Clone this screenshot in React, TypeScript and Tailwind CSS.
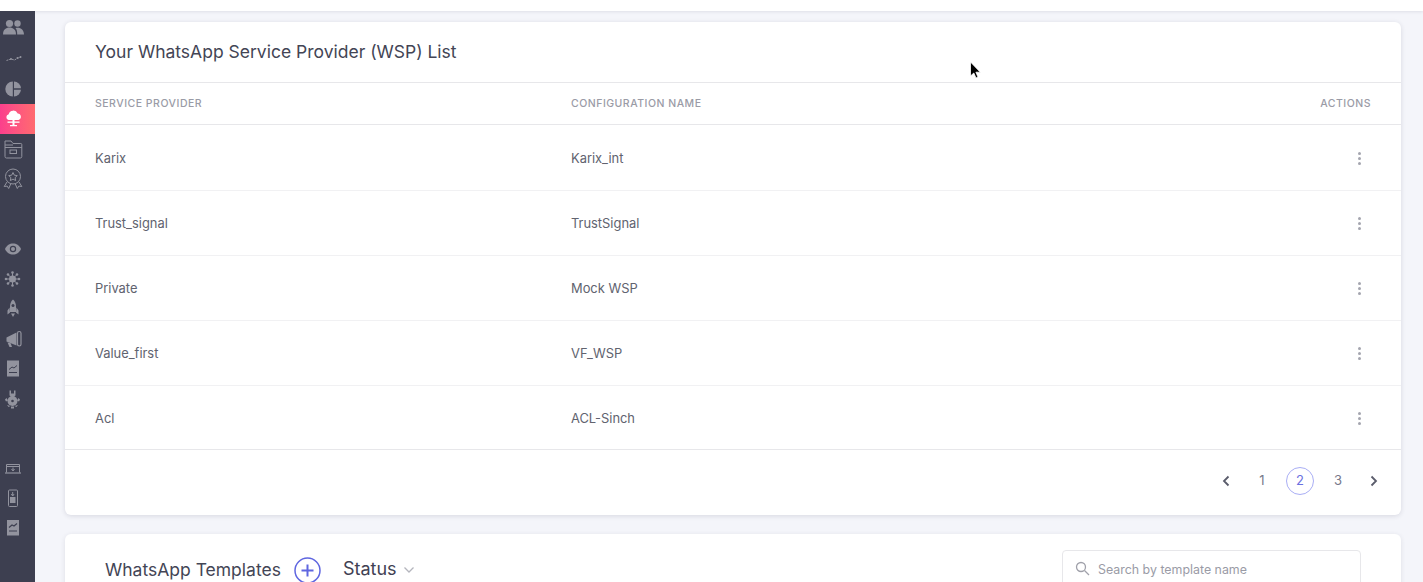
import React from "react";

const c = "#92939e";

function Side({ children, active }: { children: React.ReactNode; active?: boolean }) {
  return (
    <div className={"flex h-[30px] w-[35px] items-center justify-start " + (active ? "bg-gradient-to-r from-[#fb3f8c] to-[#ff6a6f]" : "")}>
      {children}
    </div>
  );
}

const I = ({ children }: { children: React.ReactNode }) => (
  <svg width="26" height="24" viewBox="0 0 26 24">{children}</svg>
);

const rows = [
  ["Karix", "Karix_int", "h-[66px] pt-[2px]"],
  ["Trust_signal", "TrustSignal", "h-[65px] pt-[1px]"],
  ["Private", "Mock WSP", "h-[65px] pt-[1px]"],
  ["Value_first", "VF_WSP", "h-[65px] pt-[1px]"],
  ["Acl", "ACL-Sinch", "h-[64px] pt-[2px]"],
];

export default function App() {
  return (
    <div className="relative flex h-[582px] w-[1423px] flex-col overflow-hidden bg-[#f4f5fa] text-[#4a4c5c] [font-family:Inter,'Liberation_Sans',sans-serif]">
      <div className="h-[11px] shrink-0 bg-white shadow-[0_1px_3px_rgba(40,40,70,0.1)]" />
      <div className="flex min-h-0 flex-1">
        <aside className="flex w-[35px] shrink-0 flex-col bg-[#3d3f50] pt-[3px]">
          <Side>
            <I>
              <circle cx="9.500" cy="6.500" r="3.600" fill={c} />
              <circle cx="17.500" cy="6.500" r="3.200" fill={c} />
              <path d="M3 17.500c0-5 3-7 6.500-7s6.500 2 6.500 7z" fill={c} />
              <path d="M16.500 10.800c4-.6 7.500 2 7.500 6.700h-6.800c0-3-.3-5-1.700-6.200z" fill={c} />
            </I>
          </Side>
          <Side>
            <I>
              <path d="M6.500 13.500l4.500-1.500 3.500 1 3.500-2 3-1" fill="none" stroke={c} strokeWidth="1" strokeDasharray="2 .8" />
              <circle cx="11" cy="12" r="1" fill={c} />
              <circle cx="17.500" cy="11" r="1" fill={c} />
              <circle cx="20.500" cy="10" r="1" fill={c} />
            </I>
          </Side>
          <Side>
            <I>
              <path d="M12.800 4.500a7.500 7.500 0 1 0 0 15z" fill={c} />
              <path d="M14 4.500a7.500 7.500 0 0 1 7 6.800h-7z" fill={c} />
              <path d="M14 12.800h7a7.500 7.500 0 0 1-7 6.700z" fill={c} />
            </I>
          </Side>
          <Side active>
            <I>
              <path d="M8.500 13a3 3 0 0 1 .2-5.800 4.800 4.800 0 0 1 9-.8 3.400 3.400 0 0 1 .9 6.600z" fill="#fff" />
              <path d="M7.500 14.500h12v1.300h-12z" fill="#fff" />
              <path d="M12.500 13h2v5h-2zM10 18h7v1.300h-7z" fill="#fff" />
            </I>
          </Side>
          <Side>
            <I>
              <path d="M5 19.500V4h6l2 2.500h7.800a1 1 0 0 1 1 1v12a1.500 1.500 0 0 1-1.500 1.500H6.500A1.500 1.500 0 0 1 5 19.500z" fill="none" stroke={c} strokeWidth="1" />
              <path d="M5 10.500h16.800M5 8h8" fill="none" stroke={c} strokeWidth="1" />
              <rect x="10" y="13" width="6.500" height="3.500" fill="none" stroke={c} strokeWidth="1" />
            </I>
          </Side>
          <Side>
            <I>
              <circle cx="13" cy="9.500" r="7.500" fill="none" stroke={c} strokeWidth="1" />
              <path d="M13 5.500l1.300 2.700 3 .4-2.200 2 .6 3-2.700-1.500-2.700 1.500.6-3-2.200-2 3-.4z" fill="none" stroke={c} strokeWidth="1" />
              <path d="M7 15l-2.800 4.500 3-.4 1.500 2.400 2-4.500M19 15l2.800 4.500-3-.4-1.500 2.400-2-4.500" fill="none" stroke={c} strokeWidth="1" />
            </I>
          </Side>
          <div className="h-10 shrink-0" />
          <Side>
            <I>
              <path d="M5 12c2-4 4.500-5.500 8-5.500s6 1.500 8 5.500c-2 4-4.500 5.500-8 5.500S7 16 5 12z" fill={c} />
              <circle cx="13" cy="12" r="3.200" fill="#3d3f50" />
              <circle cx="13" cy="12" r="2" fill={c} />
            </I>
          </Side>
          <Side>
            <I>
              <circle cx="12.500" cy="12" r="3.500" fill={c} />
              <path d="M12.500 5.500v13M6 12h13M8 7.500l9 9M17 7.500l-9 9" stroke={c} strokeWidth="1" />
              {[[12.5, 5.5], [12.5, 18.5], [6, 12], [19, 12], [8, 7.5], [17, 16.5], [17, 7.5], [8, 16.5]].map(([x, y], i) => (
                <circle key={i} cx={x} cy={y} r="1.300" fill={c} />
              ))}
            </I>
          </Side>
          <Side>
            <I>
              <path d="M13 2.500c2.300 2 3 4.500 3 7.500v5h-6v-5c0-3 .7-5.500 3-7.500z" fill={c} />
              <path d="M9.500 10.500l-2 3v4l2.500-2zM16.500 10.500l2 3v4l-2.500-2z" fill={c} />
              <path d="M11 16.500h4l-2 3.500z" fill={c} />
              <circle cx="13" cy="8.500" r="1.500" fill="#3d3f50" />
            </I>
          </Side>
          <Side>
            <I>
              <path d="M6.500 10.500l10-5v13l-10-4z" fill={c} />
              <rect x="17.500" y="4.500" width="3.500" height="14.500" rx="1.700" fill="none" stroke={c} strokeWidth="1.200" />
              <path d="M7.500 15.500l2 4.500H12l-1.500-4z" fill={c} />
            </I>
          </Side>
          <Side>
            <I>
              <rect x="7" y="3.500" width="12" height="16" fill={c} />
              <path d="M9 12.500l3-2.500 2 1 3-2.500" fill="none" stroke="#3d3f50" strokeWidth="1" />
              <path d="M9 15.500h8" stroke="#3d3f50" strokeWidth="1" />
            </I>
          </Side>
          <Side>
            <I>
              <circle cx="12.500" cy="14" r="5" fill={c} />
              <path d="M9.500 3.500v5l3 2 3-2v-5L14 3.500v3h-3v-3zM6.500 11L5 12.500l1 2 2-1zM18.500 11l1.500 1.500-1 2-2-1zM7 18l1.500 2 2-1zM18 18l-1.500 2-2-1zM11 19.500h3v2h-3z" fill={c} />
              <circle cx="12.500" cy="14" r="1.300" fill="#3d3f50" />
            </I>
          </Side>
          <div className="h-10 shrink-0" />
          <Side>
            <I>
              <path d="M6.500 15.500V7.500h13v8" fill="none" stroke={c} strokeWidth="1" />
              <path d="M5 16h16" stroke={c} strokeWidth="1.200" />
              <path d="M6.500 9.500h13" stroke={c} strokeWidth="1" />
              <path d="M13 10.500v3M11.500 12l1.500 2 1.500-2" fill="none" stroke={c} strokeWidth="1" />
            </I>
          </Side>
          <Side>
            <I>
              <rect x="8.500" y="3" width="9" height="16.500" rx="1" fill="none" stroke={c} strokeWidth="1" />
              <rect x="10" y="10" width="5.500" height="6" fill={c} />
              <path d="M12.700 5v3.500M11.300 7l1.400 2 1.400-2" fill="none" stroke={c} strokeWidth="1" />
            </I>
          </Side>
          <Side>
            <I>
              <rect x="7" y="3" width="12" height="15.500" fill={c} />
              <path d="M9 10.500l3-2.500 2 1 3-2.500" fill="none" stroke="#3d3f50" strokeWidth="1.200" />
              <path d="M9 14h8" stroke="#3d3f50" strokeWidth="1" />
            </I>
          </Side>
        </aside>

        <main className="flex min-w-0 flex-1 flex-col gap-[19px] pl-[30px] pr-[22px] pt-[11px]">
          <section className="h-[493px] shrink-0 rounded-[6px] bg-white shadow-[0_1px_5px_rgba(40,40,70,0.14)]">
            <h2 className="flex h-[61px] items-center border-b border-[#e7e7ea] pl-[30px] text-[17.500px] font-normal leading-none text-[#434555]">
              Your WhatsApp Service Provider (WSP) List
            </h2>
            <div className="flex h-[42px] items-center border-b border-[#e7e7ea] pl-[30px] pr-[30px] text-[10.500px] font-medium tracking-[0.5px] text-[#9a9ba6]">
              <span className="w-[476px]">SERVICE PROVIDER</span>
              <span className="flex-1">CONFIGURATION NAME</span>
              <span>ACTIONS</span>
            </div>
            {rows.map(([a, b, h], i) => (
              <div
                key={a}
                className={`flex items-center pl-[30px] pr-[40px] text-[12.900px] text-[#61636f] ${h} ${i < 4 ? "border-b border-[#f1f1f3]" : "border-b border-[#e7e7ea]"}`}
              >
                <span className="w-[476px]">{a}</span>
                <span className="flex-1">{b}</span>
                <span className="flex flex-col gap-[2px]">
                  <i className="h-[3px] w-[3px] rounded-full bg-[#a4a5af]" />
                  <i className="h-[3px] w-[3px] rounded-full bg-[#a4a5af]" />
                  <i className="h-[3px] w-[3px] rounded-full bg-[#a4a5af]" />
                </span>
              </div>
            ))}
            <nav className="flex h-[61px] items-center justify-end pr-[12px] text-[13px] text-[#77798a]">
              <span className="flex w-[30px] justify-center">
                <svg width="10" height="12" viewBox="0 0 10 12"><path d="M7.500 1.500L3 6l4.500 4.500" fill="none" stroke="#5a5c6b" strokeWidth="1.800" /></svg>
              </span>
              <span className="ml-[7px] flex h-[28px] w-[28px] items-center justify-center">1</span>
              <span className="ml-[10px] flex h-[28px] w-[28px] items-center justify-center rounded-full border border-[#a9aef5] text-[#6a70e0]">2</span>
              <span className="ml-[10px] flex h-[28px] w-[28px] items-center justify-center">3</span>
              <span className="ml-[7px] flex w-[30px] justify-center">
                <svg width="10" height="12" viewBox="0 0 10 12"><path d="M2.500 1.500L7 6l-4.500 4.500" fill="none" stroke="#5a5c6b" strokeWidth="1.800" /></svg>
              </span>
            </nav>
          </section>

          <section className="flex h-[80px] shrink-0 items-start rounded-t-[6px] bg-white pl-[40px] pr-[40px] pt-[16px] shadow-[0_1px_5px_rgba(40,40,70,0.1)]">
            <span className="mt-[9px] text-[17.500px] leading-[22px] text-[#434555]">WhatsApp Templates</span>
            <svg className="ml-[13px] mt-[7px]" width="27" height="27" viewBox="0 0 27 27">
              <circle cx="13.500" cy="13.500" r="12.500" fill="none" stroke="#5f66e0" strokeWidth="1.500" />
              <path d="M13.500 7.500v12M7.500 13.500h12" stroke="#5f66e0" strokeWidth="2" />
            </svg>
            <span className="ml-[22px] mt-[8px] text-[18px] leading-[22px] text-[#3f4153]">Status</span>
            <svg className="ml-[6px] mt-[16px]" width="12" height="8" viewBox="0 0 12 8"><path d="M1.500 1.500L6 6l4.500-4.500" fill="none" stroke="#b4b5bd" strokeWidth="1.300" /></svg>
            <div className="ml-auto flex h-[44px] w-[299px] items-start gap-[8px] rounded-[4px] border border-[#e7e7ea] pl-[12px] pt-[10px] text-[12.400px] leading-[17px] text-[#9a9ba6]">
              <svg width="15" height="15" viewBox="0 0 15 15" fill="none" stroke="#a0a1aa" strokeWidth="1.300">
                <circle cx="6" cy="6" r="4.500" />
                <path d="M9.500 9.500l4.500 4.500" />
              </svg>
              <span>Search by template name</span>
            </div>
          </section>
        </main>
      </div>
      <svg className="absolute left-[969px] top-[61px]" width="13" height="19" viewBox="0 0 13 19">
        <path d="M1.500 1v14l3.300-3 2.200 5 2-.9-2.100-4.900h4.400z" fill="#000" stroke="#fff" strokeWidth="0.800" />
      </svg>
    </div>
  );
}
